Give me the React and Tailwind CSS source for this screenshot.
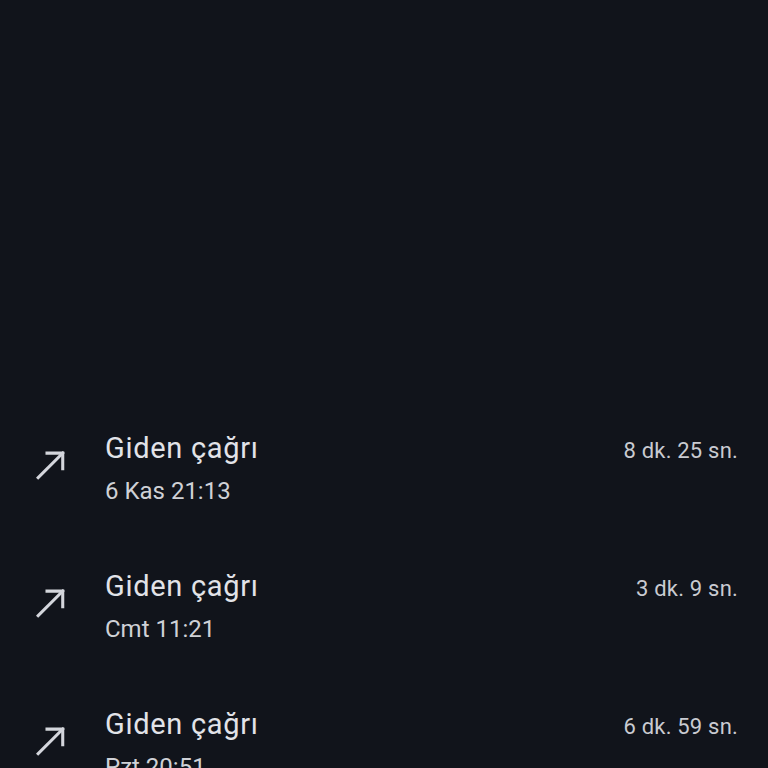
const calls = [
  { label: 'Giden çağrı', when: '6 Kas 21:13', duration: '8 dk. 25 sn.' },
  { label: 'Giden çağrı', when: 'Cmt 11:21', duration: '3 dk. 9 sn.' },
  { label: 'Giden çağrı', when: 'Pzt 20:51', duration: '6 dk. 59 sn.' },
]

const OutgoingIcon = () => (
  <svg className="w-[46px] h-[46px] shrink-0" viewBox="0 0 24 24" fill="none" aria-hidden="true">
    <path d="M4.8 18.6 17.6 5.8" stroke="#d4d6dc" strokeWidth="1.6" strokeLinecap="square" />
    <path d="M9.4 5.8h8.2v8.2" stroke="#d4d6dc" strokeWidth="1.6" strokeLinecap="square" />
  </svg>
)

export default function App() {
  return (
    <div
      className="h-[768px] w-[768px] overflow-hidden bg-[#11141b] text-[#e2e3e8]"
      style={{ fontFamily: 'Roboto, "Liberation Sans", sans-serif' }}
    >
      <div className="h-[396px]" />
      <ul className="flex flex-col">
        {calls.map((call, i) => (
          <li key={i} className="flex h-[138px] items-center pl-[29px] pr-[30px]">
            <OutgoingIcon />
            <div className="ml-[30px] mt-[6px] flex flex-1 flex-col gap-2">
              <div className="flex items-baseline justify-between">
                <span className="text-[29px] leading-9 tracking-[0.7px]">{call.label}</span>
                <span className="text-[22px] leading-8 tracking-[0.2px] text-[#c9cbd1]">{call.duration}</span>
              </div>
              <span className="text-[24px] leading-8 text-[#cfd1d6]">{call.when}</span>
            </div>
          </li>
        ))}
      </ul>
    </div>
  )
}
